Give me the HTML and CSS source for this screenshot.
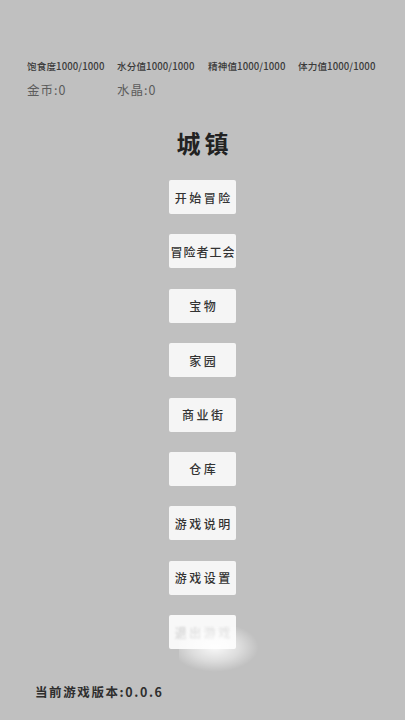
FILE: index.html
```html
<!DOCTYPE html>
<html lang="zh">
<head>
<meta charset="utf-8">
<link rel="stylesheet" href="styles.css">
</head>
<body>
<div class="screen">
  <div class="stats">
    <span>饱食度1000/1000</span>
    <span>水分值1000/1000</span>
    <span>精神值1000/1000</span>
    <span>体力值1000/1000</span>
  </div>
  <div class="money">
    <span>金币:0</span>
    <span>水晶:0</span>
  </div>
  <h1 class="title">城镇</h1>
  <div class="menu">
    <div class="btn">开始冒险</div>
    <div class="btn tight">冒险者工会</div>
    <div class="btn">宝物</div>
    <div class="btn">家园</div>
    <div class="btn">商业街</div>
    <div class="btn">仓库</div>
    <div class="btn">游戏说明</div>
    <div class="btn">游戏设置</div>
    <div class="btn faded"><span class="ghost">退出游戏</span><span class="glare"></span></div>
  </div>
  <div class="version">当前游戏版本:0.0.6</div>
</div>
</body>
</html>
```
FILE: styles.css
```css
html, body {
  margin: 0;
  padding: 0;
  background: #c0c0c0;
}
.screen {
  width: 405px;
  height: 720px;
  box-sizing: border-box;
  padding-top: 60px;
  font-family: "Noto Sans CJK SC", "Noto Sans", sans-serif;
  color: #333;
  position: relative;
  overflow: hidden;
}
.stats {
  display: grid;
  grid-template-columns: 90px 91px 90px 90px;
  padding-left: 27px;
  font-size: 9.6px;
  line-height: 12px;
  font-weight: 500;
  letter-spacing: 0.1px;
  color: #3a3a3a;
}
.money {
  display: grid;
  grid-template-columns: 90px 90px;
  padding-left: 27px;
  margin-top: 10px;
  font-size: 12.5px;
  line-height: 16px;
  letter-spacing: 1px;
  color: #5c5c5c;
}
.title {
  margin: 30px 0 0;
  text-align: center;
  font-size: 24px;
  line-height: 30px;
  font-weight: 700;
  letter-spacing: 4px;
  text-indent: 4px;
  color: #222;
}
.menu {
  display: flex;
  flex-direction: column;
  align-items: center;
  gap: 20.4px;
  margin-top: 22px;
}
.btn {
  position: relative;
  width: 67px;
  height: 34px;
  box-sizing: border-box;
  background: #f5f5f5;
  border-radius: 2px;
  display: flex;
  align-items: center;
  justify-content: center;
  font-size: 12px;
  letter-spacing: 2.5px;
  text-indent: 2.5px;
  font-weight: 500;
  color: #333;
  white-space: nowrap;
}
.btn.tight {
  letter-spacing: 1px;
  text-indent: 1px;
}
.btn.faded {
  background: #f8f8f8;
}
.ghost {
  color: rgba(90, 90, 90, 0.25);
  filter: blur(1.2px);
}
.glare {
  position: absolute;
  left: 10px;
  top: 12px;
  width: 80px;
  height: 45px;
  background: radial-gradient(ellipse at 45% 45%, rgba(255,255,255,0.9), rgba(255,255,255,0.45) 40%, rgba(255,255,255,0) 70%);
  pointer-events: none;
}
.version {
  position: absolute;
  left: 35px;
  top: 683px;
  font-size: 12.5px;
  line-height: 18px;
  font-weight: 600;
  letter-spacing: 1.6px;
  color: #2e2e2e;
}
```
